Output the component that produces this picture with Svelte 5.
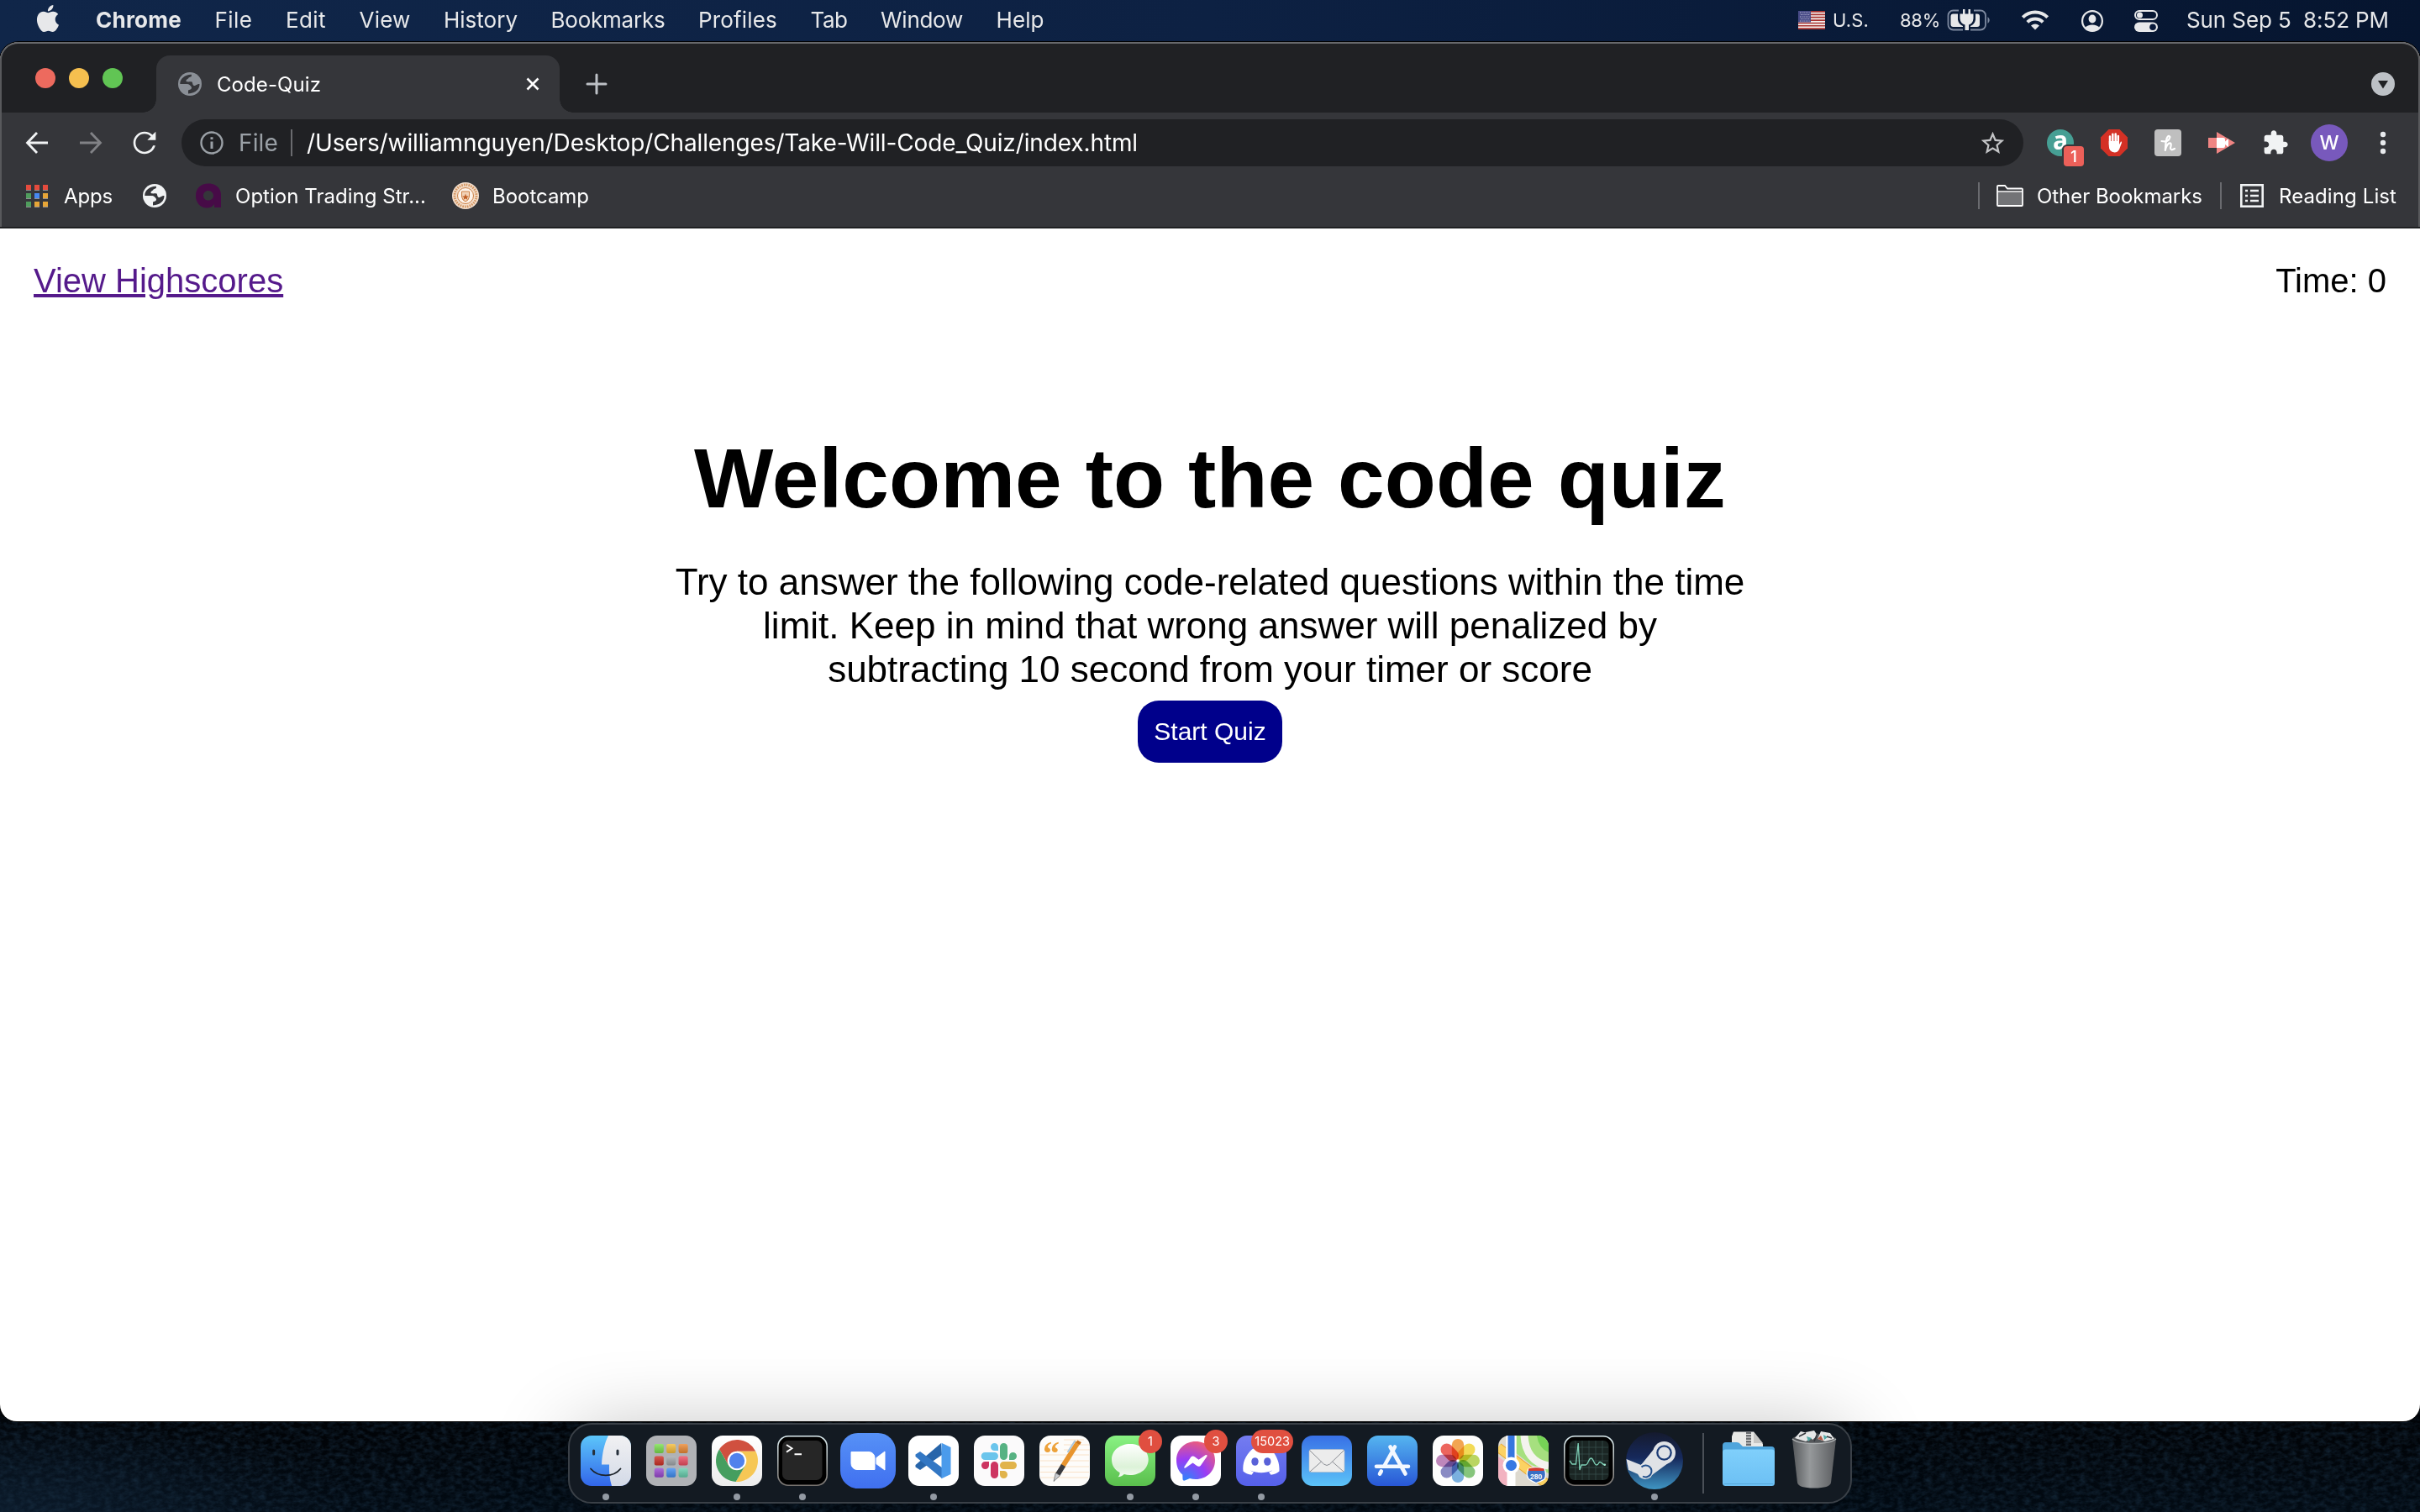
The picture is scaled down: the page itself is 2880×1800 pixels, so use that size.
<script>
  // Adjusts letter-spacing so a label occupies its designed width.
  function fit(node, width) {
    const natural = node.getBoundingClientRect().width;
    const gaps = node.textContent.length;
    node.style.letterSpacing = (width - natural) / gaps + 'px';
  }

  const menus = [
    ['File', 45], ['Edit', 48], ['View', 61], ['History', 88], ['Bookmarks', 136],
    ['Profiles', 94], ['Tab', 44], ['Window', 98], ['Help', 57]
  ];

  const dockApps = [
    { id: 'finder', running: true }, { id: 'launchpad' }, { id: 'chrome', running: true },
    { id: 'terminal', running: true }, { id: 'zoom' }, { id: 'vscode', running: true },
    { id: 'slack' }, { id: 'pages' }, { id: 'messages', running: true, badge: '1' },
    { id: 'messenger', running: true, badge: '3' }, { id: 'discord', running: true, badge: '15023' },
    { id: 'mail' }, { id: 'appstore' }, { id: 'photos' }, { id: 'maps' }, { id: 'activity' },
    { id: 'steam', running: true }
  ];

  const pads = [
    '#7be04f', '#f6bd3c', '#ec8a35', '#cf3127', '#a3a8ac', '#ee4f63', '#9a49d0', '#3f8df2', '#67cfae'
  ];
  const petals = ['#f39a3a', '#f3d83f', '#b3d24c', '#76bf6b', '#6aa8dd', '#7a7bbd', '#b777b4', '#ec5148'];
</script>

{#snippet globe(cls)}
  <svg class={cls} viewBox="0 0 28 28">
    <circle cx="14" cy="14" r="14" fill="currentColor" />
    <path class="sea" d="M2.3 14C2 8 8 2.6 16 2.8L15.8 5L12.5 6.5C12 8.5 9.5 8 9.5 10.5C10 12 14 11 16.5 11.5C17.5 13 17 15.5 19 16C21.5 16 22 14 25.5 14C25.5 20 21 25 12 25.5V21.5C13.5 20.5 16 21 16 18C14 14.5 12.5 14 9 14Z" />
  </svg>
{/snippet}

{#snippet art(id)}
  {#if id === 'finder'}
    <rect width="60" height="60" rx="13" fill="url(#g-finder)" />
    <path d="M33 0C28 10 25.5 22 25 34.5H34C33.6 44 34.6 52 37 60H47A13 13 0 0 0 60 47V13A13 13 0 0 0 47 0Z" fill="url(#g-face)" />
    <path d="M15.6 18v4M44 18v4" stroke="#26303c" stroke-width="3" stroke-linecap="round" />
    <path d="M12 39.5C21 50 39 50 47.5 39.5" fill="none" stroke="#1d2329" stroke-width="1.8" stroke-linecap="round" />
  {:else if id === 'launchpad'}
    <rect width="60" height="60" rx="13" fill="#b0b2b6" />
    {#each pads as color, i}
      <rect x={9.8 + (i % 3) * 14.4} y={10 + Math.floor(i / 3) * 14.4} width="11" height="11" rx="2.2" fill={color} />
      <rect x={9.8 + (i % 3) * 14.4} y={10 + Math.floor(i / 3) * 14.4} width="11" height="11" rx="2.2" fill="url(#g-pad)" />
    {/each}
  {:else if id === 'chrome'}
    <rect width="60" height="60" rx="13" fill="url(#g-white)" />
    <path d="M9.06 16.35A25 25 0 0 1 52.3 18.7H30L30 30L20.2 35.65Z" fill="#d0503f" />
    <path d="M52.3 18.7A25 25 0 0 1 28.65 54.96L39.8 35.65L30 30V18.7Z" fill="#f6c755" />
    <path d="M28.65 54.96A25 25 0 0 1 9.06 16.35L20.2 35.65L30 30L39.8 35.65Z" fill="#459e5f" />
    <circle cx="30" cy="30" r="11.3" fill="#fff" />
    <circle cx="30" cy="30" r="9.2" fill="#5182ec" />
  {:else if id === 'terminal'}
    <rect width="60" height="60" rx="13" fill="url(#g-metal)" />
    <rect x="1.6" y="1.6" width="56.8" height="56.8" rx="11.5" fill="#000" />
    <rect x="6" y="6" width="47.5" height="47" rx="7" fill="#262626" />
    <path d="M11 11l6.5 4.3l-6.5 4.3M20.5 22.3h8.5" fill="none" stroke="#fff" stroke-width="1.9" />
  {:else if id === 'zoom'}
    <rect x="-3" y="-3" width="66" height="66" rx="21" fill="url(#g-zoom)" />
    <path d="M10 19.5h21a7 7 0 0 1 7 7v14h-21a7 7 0 0 1-7-7ZM40 26.5L50 19V41L40 33.8Z" fill="#fff" stroke="#fff" stroke-linejoin="round" />
  {:else if id === 'vscode'}
    <rect width="60" height="60" rx="13" fill="#fff" />
    <path d="M39 9L40 23L14 41L8.5 37.5V35Z" fill="#2765aa" />
    <path d="M14 19L40 38V51L8.5 25V22.5Z" fill="#3277c4" />
    <path d="M39.5 8.8L50.5 14V46L39.5 51.2Z" fill="#4b9beb" />
  {:else if id === 'slack'}
    <rect width="60" height="60" rx="13" fill="#fbfafb" />
    <path d="M24.5 9a4.5 4.5 0 0 1 4.5 4.5V18h-4.5a4.5 4.5 0 0 1 0-9M13.2 20h11.3a4.5 4.5 0 0 1 0 9H13.2a4.5 4.5 0 0 1 0-9" fill="#6bc5ec" />
    <path d="M35.5 9a4.5 4.5 0 0 1 4.5 4.5v11a4.5 4.5 0 0 1-9 0v-11A4.5 4.5 0 0 1 35.5 9M42 29v-4.5a4.5 4.5 0 1 1 4.5 4.5Z" fill="#57b283" />
    <path d="M18 31v4.5A4.5 4.5 0 1 1 13.5 31ZM24.5 31a4.5 4.5 0 0 1 4.5 4.5v11a4.5 4.5 0 0 1-9 0v-11a4.5 4.5 0 0 1 4.5-4.5" fill="#cd3460" />
    <path d="M35.5 31h11a4.5 4.5 0 0 1 0 9h-11a4.5 4.5 0 0 1 0-9M31 42h4.5a4.5 4.5 0 1 1-4.5 4.5Z" fill="#e1b34b" />
  {:else if id === 'pages'}
    <rect width="60" height="60" rx="13" fill="#fdfcfa" />
    <path d="M29 5h24M29 11h30M29 17h31M1 23h58M1 30h58M1 37h58M1 43.5h58M2 50h56" stroke="#f9e2c8" stroke-width="1.2" />
    <text x="4" y="35" class="quote">“</text>
    <path d="M46 8L28 36" stroke="#e8952f" stroke-width="6" />
    <path d="M44.5 7L49 9.5" stroke="#c9741d" stroke-width="3.5" />
    <path d="M42.5 6L33.5 20" stroke="#a9c7de" stroke-width="1.8" />
    <path d="M28.5 35.5L22 46" stroke="#3a3b3f" stroke-width="6" />
    <path d="M19.3 44.5L24.5 47.7L17 54.5Z" fill="#c9ccd0" stroke="#4a4a4a" stroke-width=".6" />
  {:else if id === 'messages'}
    <rect width="60" height="60" rx="13" fill="url(#g-msg)" />
    <path d="M30 10C42.5 10 51.7 18 51.7 28.5S42.5 47 30 47C27.5 47 25 46.6 22.8 46C21 48 18.5 49 15.5 49.3C17.2 47.7 17.8 46 17.5 44C11.5 41 8 35.5 8 28.5C8 18 17.5 10 30 10Z" fill="url(#g-bubble)" />
  {:else if id === 'messenger'}
    <rect width="60" height="60" rx="13" fill="#fff" />
    <path d="M30 7C43 7 53 16.5 53 29.5S43 52 30 52C27.5 52 25.2 51.7 23 51L17 53.5C15.6 54 14.5 53.2 14.5 51.8L14.3 46.5C9.5 42.5 7 36.5 7 29.5C7 16.5 17 7 30 7Z" fill="url(#g-fb)" />
    <path d="M16.5 37L24 26C25.2 24.3 27.2 24 28.8 25.2L33.5 28.7L41.5 23.2C43 22.3 44.3 23.4 43.3 24.9L36.2 35.3C35 37 33 37.3 31.4 36.1L26.5 32.6L18.2 38.3C16.8 39.2 15.6 38.3 16.5 37Z" fill="#fff" />
  {:else if id === 'discord'}
    <rect width="60" height="60" rx="13" fill="url(#g-discord)" />
    <path d="M19.5 16C22 15 24.5 15 26 15L27 17H33L34 15C37 15 40 15.5 42 16.5C49 25 52 33 51.5 42.5C48.5 45 45 46.3 41.5 46.8L39 43.5C41 42.8 42.5 42 43 41.5C34.5 45 25.5 45 17 41.5C18 42.3 19.2 43 21 43.5L18.5 46.8C15 46.3 11.5 45 8.5 42.5C7.5 33 10.5 24 19.5 16Z" fill="#fff" />
    <ellipse cx="22.5" cy="31" rx="4.2" ry="4.8" fill="#5961d8" />
    <ellipse cx="37.3" cy="31" rx="4.2" ry="4.8" fill="#5961d8" />
  {:else if id === 'mail'}
    <rect width="60" height="60" rx="13" fill="url(#g-mail)" />
    <rect x="9" y="16.5" width="42" height="27" rx="2.5" fill="#ececec" stroke="#b9bcc2" stroke-width=".6" />
    <path d="M9.5 17.5L26.5 34Q30 37 33.5 34L50.5 17.5M10 43L23.5 31M50 43L36.5 31" fill="none" stroke="#8b8e94" />
  {:else if id === 'appstore'}
    <rect width="60" height="60" rx="13" fill="url(#g-store)" />
    <path d="M33 13.5L20.5 36M27.5 13.5L45.5 45.5M11 36.8H49M16.8 42.5L15 45.7" stroke="#f3f8ff" stroke-width="4.6" stroke-linecap="round" />
  {:else if id === 'photos'}
    <rect width="60" height="60" rx="13" fill="#fdfdfd" />
    {#each petals as color, i}
      <rect class="petal" x="22.8" y="4" width="14.4" height="24.5" rx="7.2" fill={color} transform={`rotate(${i * 45} 30 30)`} />
    {/each}
  {:else if id === 'maps'}
    <g clip-path="url(#c-icon)">
      <rect width="60" height="60" fill="#ddd9cf" />
      <path d="M0 25L12 34V60H0Z" fill="#f2b3c1" />
      <path d="M20 0H60V45L38 34L20 20Z" fill="#a6e07f" />
      <path d="M46 0H60V20Q48 15 46 0Z" fill="#76d356" />
      <path d="M31 0C32 20 42 33 60 36" fill="none" stroke="#f4f3ee" stroke-width="9" />
      <path d="M0 14L58 58" stroke="#eaa933" stroke-width="11.5" />
      <path d="M0 14L58 58" stroke="#fbd263" stroke-width="9.5" />
      <path d="M15.5 36V60" stroke="#fff" stroke-width="10" />
      <path d="M15.5 0V34" stroke="#fff" stroke-width="12.5" />
      <path d="M15.5 0V34" stroke="#3676df" stroke-width="8" />
      <circle cx="15.5" cy="35.5" r="10" fill="#fff" /><circle cx="15.5" cy="35.5" r="6.5" fill="#3779e3" />
      <path d="M36 39.5Q45 36 55 39.5Q58 47 55 52Q50 55 45 56.5Q39 54 36 51.5Q32.5 46 36 39.5Z" fill="#3a6fc4" stroke="#fff" stroke-width="1.3" />
      <path d="M36 42V39.5Q45 37 54.5 39.5V42Z" fill="#d53a2f" />
      <text x="45.2" y="51.5" class="route">280</text>
    </g>
  {:else if id === 'activity'}
    <rect width="60" height="60" rx="13" fill="url(#g-metal)" />
    <rect x="1.6" y="1.6" width="56.8" height="56.8" rx="11.5" fill="#000" />
    <rect x="6.5" y="6" width="47" height="47" rx="6" fill="#1b2624" />
    <path d="M14 6v47M22 6v47M30 6v47M38 6v47M46 6v47M7 14h46M7 22h46M7 30h46M7 38h46M7 46h46" stroke="#3b5450" stroke-width=".7" />
    <path d="M7 30L10 34H14.5L17.2 9L19 41L21 35H26C29 35 29.5 27 32.5 27S36 35 39 35S41 31.5 43 31.5S45.5 34.5 49 35" fill="none" stroke="#7ed0b6" stroke-width="1.3" />
    <circle cx="48.8" cy="34.8" r="1.3" fill="#9fe7cf" />
  {:else if id === 'steam'}
    <circle cx="30" cy="30" r="34" fill="url(#g-steam)" />
    <g fill="#dfe2e6">
      <path d="M-3.5 28L20 37.5L15 48L-1 41Z" />
      <circle cx="41.5" cy="20.5" r="13.5" />
      <circle cx="19" cy="42.5" r="9.5" />
      <path d="M28.5 17L14 35L27 47L46 33Z" />
    </g>
    <circle cx="41.5" cy="20.5" r="9.3" fill="#1a3a75" /><circle cx="41.5" cy="20.5" r="7" fill="#dfe2e6" />
    <path d="M14.5 37.5A7 7 0 1 1 16 48.5" fill="none" stroke="#23518c" stroke-width="2" />
  {/if}
{/snippet}

<div class="desktop">
  <svg class="wallpaper" preserveAspectRatio="none">
    <defs>
      <filter id="grain" x="0" y="0" width="100%" height="100%" color-interpolation-filters="sRGB">
        <feTurbulence type="fractalNoise" baseFrequency=".12 .2" numOctaves="3" seed="4" />
        <feColorMatrix values="0 0 0 0 .1  0 0 0 0 .19  0 0 0 0 .27  1.1 0 0 0 -.38" />
      </filter>
      <linearGradient id="g-finder" x2="0" y2="1"><stop stop-color="#5cc6fa" /><stop offset="1" stop-color="#3266ea" /></linearGradient>
      <linearGradient id="g-face" x2="0" y2="1"><stop stop-color="#f1f1f3" /><stop offset="1" stop-color="#d3dae7" /></linearGradient>
      <linearGradient id="g-pad" x2="0" y2="1"><stop stop-color="#fff" stop-opacity=".2" /><stop offset="1" stop-opacity=".18" /></linearGradient>
      <linearGradient id="g-white" x2="0" y2="1"><stop stop-color="#fff" /><stop offset="1" stop-color="#ececec" /></linearGradient>
      <linearGradient id="g-metal" x2="0" y2="1"><stop stop-color="#dff0f4" /><stop offset="1" stop-color="#77726e" /></linearGradient>
      <linearGradient id="g-zoom" x2="0" y2="1"><stop stop-color="#5691f6" /><stop offset="1" stop-color="#4070f0" /></linearGradient>
      <linearGradient id="g-msg" x2="0" y2="1"><stop stop-color="#89f283" /><stop offset="1" stop-color="#5abf4d" /></linearGradient>
      <linearGradient id="g-bubble" x2="0" y2="1"><stop stop-color="#fff" /><stop offset=".7" stop-color="#dcf2d8" /><stop offset="1" stop-color="#f5fbf4" /></linearGradient>
      <radialGradient id="g-fb" cx=".25" cy="1" r="1.1"><stop stop-color="#2a86fb" /><stop offset=".5" stop-color="#9a3cf5" /><stop offset="1" stop-color="#f4606f" /></radialGradient>
      <linearGradient id="g-discord" x2="0" y2="1"><stop stop-color="#747cf0" /><stop offset="1" stop-color="#5560ea" /></linearGradient>
      <linearGradient id="g-mail" x2="0" y2="1"><stop stop-color="#3870e6" /><stop offset="1" stop-color="#5cc3f8" /></linearGradient>
      <linearGradient id="g-store" x2="0" y2="1"><stop stop-color="#55b5f0" /><stop offset="1" stop-color="#2857d6" /></linearGradient>
      <linearGradient id="g-steam" x2="0" y2="1"><stop stop-color="#151a2e" /><stop offset=".45" stop-color="#16295c" /><stop offset="1" stop-color="#3f95c3" /></linearGradient>
      <linearGradient id="g-folder" x2="0" y2="1"><stop stop-color="#7fcffb" /><stop offset="1" stop-color="#6cc0f4" /></linearGradient>
      <linearGradient id="g-trash"><stop stop-color="#55585b" /><stop offset=".4" stop-color="#96999b" /><stop offset="1" stop-color="#5a5c5f" /></linearGradient>
      <clipPath id="c-icon"><rect width="60" height="60" rx="13" /></clipPath>
    </defs>
    <rect width="100%" height="100%" filter="url(#grain)" />
  </svg>

  <header class="menubar">
    <svg class="apple" viewBox="0 0 24 24"><path fill="currentColor" d="M12.152 6.896c-.948 0-2.415-1.078-3.960-1.040-2.040.027-3.910 1.183-4.961 3.014-2.117 3.675-.546 9.103 1.519 12.090 1.013 1.454 2.208 3.090 3.792 3.039 1.520-.065 2.090-.987 3.935-.987 1.831 0 2.350.987 3.960.948 1.637-.026 2.676-1.480 3.676-2.948 1.156-1.688 1.636-3.325 1.662-3.415-.039-.013-3.182-1.221-3.220-4.857-.026-3.040 2.480-4.494 2.597-4.559-1.429-2.090-3.623-2.324-4.390-2.376-2-.156-3.675 1.090-4.610 1.090zM15.530 3.830c.843-1.012 1.400-2.427 1.245-3.830-1.207.052-2.662.805-3.532 1.818-.780.896-1.454 2.338-1.273 3.714 1.338.104 2.715-.688 3.559-1.701" /></svg>
    <nav class="menus">
      <span class="app-name" use:fit={102}>Chrome</span>
      {#each menus as [label, width]}
        <span use:fit={width}>{label}</span>
      {/each}
    </nav>
    <div class="status">
      <svg class="flag" viewBox="0 0 32 22">
        <rect width="32" height="22" fill="#a8322f" />
        <path d="M0 2.6h32M0 6h32M0 9.4h32M0 12.8h32M0 16.2h32M0 19.4h32" stroke="#f3f0ee" stroke-width="1.7" />
        <rect width="15" height="13.5" fill="#474a86" />
        <path d="M2 2h12M3 4.5h11M2 7h12M3 9.5h11M2 12h12" stroke="#c5c6dd" stroke-width="1" stroke-dasharray="1 1.3" />
      </svg>
      <span class="small us" use:fit={43}>U.S.</span>
      <span class="small" use:fit={48}>88%</span>
      <svg class="battery" viewBox="0 0 52 26">
        <path d="M14 1.5H7.5A6 6 0 0 0 1.5 7.5V18.5A6 6 0 0 0 7.5 24.500H19M32 1.5H40A6 6 0 0 1 46 7.5V18.5A6 6 0 0 1 40 24.5H28" fill="none" stroke="#7e8aa0" stroke-width="1.8" />
        <path d="M48.5 9Q53 13 48.5 17Z" fill="#7e8aa0" />
        <path d="M7.5 5.500H13V12.500Q14 18 19 20V21H7.500Q4.500 21 4.500 18V8.500Q4.500 5.500 7.500 5.500M34 5.500H36Q39 5.500 39 8.500V18Q39 21 36 21H28V20Q33 18 34 12.500Z" fill="currentColor" />
        <path d="M19 0h2.500v5.500h4V0H28v5.500h3.500V11Q31 17 26 18.500V25h-4.500V18.500Q16 17 15.500 11V5.500H19Z" fill="currentColor" />
      </svg>
      <svg class="wifi" viewBox="0 0 34 26" fill="none" stroke="currentColor" stroke-width="4">
        <path d="M2.3 9.7A20.8 20.8 0 0 1 31.7 9.7" /><path d="M7.8 15.3A13 13 0 0 1 26.2 15.3" />
        <path d="M17 24.5L12 19.5Q17 15.5 22 19.5Z" fill="currentColor" stroke="none" />
      </svg>
      <svg class="user" viewBox="0 0 26 26">
        <circle cx="13" cy="13" r="11.9" fill="none" stroke="currentColor" stroke-width="2.2" />
        <ellipse cx="13" cy="10.5" rx="4.4" ry="5" fill="currentColor" />
        <path d="M4.5 21Q7 17.5 13 17.5T21.5 21Q18 25 13 25T4.5 21Z" fill="currentColor" />
      </svg>
      <svg class="control" viewBox="0 0 28 26">
        <rect x="1" y="1" width="26" height="10" rx="5" fill="none" stroke="currentColor" stroke-width="2" />
        <circle cx="6.5" cy="6" r="3.5" fill="currentColor" />
        <rect y="14.5" width="28" height="11.5" rx="5.75" fill="currentColor" /><circle cx="22" cy="20.2" r="3.8" fill="#08193a" />
      </svg>
      <span class="clock" use:fit={241}>Sun Sep 5&nbsp; 8:52 PM</span>
    </div>
  </header>

  <main class="window">
    <div class="chrome">
      <div class="strip">
        <div class="lights"><i class="red"></i><i class="amber"></i><i class="green"></i></div>
        <div class="tab">
          {@render globe('tab-globe')}
          <span use:fit={124}>Code-Quiz</span>
          <svg class="close" viewBox="0 0 16 16"><path d="M1.5 1.5L14.5 14.5M14.5 1.5L1.5 14.5" stroke="#fff" stroke-width="2.6" /></svg>
        </div>
        <svg class="plus" viewBox="0 0 24 24"><path d="M12 1V23M1 12H23" stroke="#bdc1c6" stroke-width="3" stroke-linecap="round" /></svg>
        <svg class="chevron" viewBox="0 0 28 28"><circle cx="14" cy="14" r="14" fill="#bdc1c6" /><path d="M8 10H20L14 19.5Z" fill="#202124" /></svg>
      </div>

      <div class="toolbar">
        <svg class="back" viewBox="0 0 28 28"><path d="M14 2L2.5 14L14 26M3 14H27" /></svg>
        <svg class="forward" viewBox="0 0 28 28"><path d="M14 2L25.5 14L14 26M25 14H1" /></svg>
        <svg class="reload" viewBox="0 0 24 24"><path fill="currentColor" d="M17.650 6.350C16.200 4.900 14.210 4 12 4c-4.420 0-7.990 3.580-7.990 8s3.570 8 7.990 8c3.730 0 6.840-2.550 7.730-6h-1.700c-.9 2.500-3.200 4.400-6.030 4.400-3.530 0-6.400-2.870-6.400-6.400s2.870-6.400 6.400-6.400c1.770 0 3.350.74 4.500 1.900L14 10h6V4z" /></svg>
        <div class="omnibox">
          <svg class="info" viewBox="0 0 28 28"><circle cx="14" cy="14" r="12.5" fill="none" stroke="#9aa0a6" stroke-width="2.4" /><path d="M14 12.5V21M14 7.2V10" stroke="#9aa0a6" stroke-width="3" /></svg>
          <span class="scheme" use:fit={47}>File</span>
          <i class="rule"></i>
          <span use:fit={989}>/Users/williamnguyen/Desktop/Challenges/Take-Will-Code_Quiz/index.html</span>
          <svg class="star" viewBox="0 0 24 24"><path fill="#c3c4c6" d="M22 9.240l-7.190-.620L12 2 9.190 8.630 2 9.240l5.460 4.730L5.820 21 12 17.270 18.180 21l-1.630-7.030L22 9.240zM12 15.400l-3.760 2.270 1-4.280-3.320-2.880 4.380-.380L12 6.100l1.710 4.040 4.380.380-3.320 2.880 1 4.280L12 15.400z" /></svg>
        </div>
        <div class="extensions">
          <div class="amazon"><b>a</b><em>1</em></div>
          <svg class="ext" viewBox="0 0 32 32"><path d="M9.5 0H22.5L32 9.5V22.5L22.5 32H9.5L0 22.5V9.5Z" fill="#d43125" /><path d="M11 18V8.5M14.3 16V5.7M17.7 16V5.5M20.8 17V8" stroke="#fff" stroke-width="2.5" stroke-linecap="round" /><path d="M9.8 14H22V18L24 14.5Q25.5 14 25 16L22 24Q20 27.5 16.5 27.5Q9.8 27 9.8 20Z" fill="#fff" /></svg>
          <svg class="ext" viewBox="0 0 32 32"><rect width="32" height="32" rx="4" fill="#bfbfbf" /><path d="M8.5 14Q17 16 18.5 9Q16.5 6 14.5 11Q13 17 12.8 25Q15 16 19 16.5Q20.5 17.5 19 22Q19 26 24 23" fill="none" stroke="#fff" stroke-width="2.2" stroke-linecap="round" stroke-linejoin="round" /></svg>
          <svg class="ext" viewBox="0 0 32 32"><path d="M0 10H10V3L32 16L10 29V22H0Z" fill="#f08583" /><path d="M10 10H18Q20 10 20 12V14.5L24 11V21L20 18V20Q20 22 18 22H10Z" fill="#fff" /></svg>
          <svg class="ext" viewBox="0 0 24 24"><path fill="#f1f3f4" d="M20.500 11H19V7c0-1.100-.9-2-2-2h-4V3.500C13 2.120 11.880 1 10.500 1S8 2.120 8 3.500V5H4c-1.100 0-1.990.9-1.990 2v3.800H3.500c1.490 0 2.700 1.210 2.700 2.700s-1.210 2.700-2.700 2.700H2V20c0 1.100.9 2 2 2h3.800v-1.500c0-1.490 1.210-2.700 2.700-2.700 1.490 0 2.700 1.210 2.700 2.700V22H17c1.100 0 2-.9 2-2v-4h1.500c1.380 0 2.500-1.120 2.500-2.500S21.880 11 20.500 11z" /></svg>
        </div>
        <span class="avatar">W</span>
        <svg class="kebab" viewBox="0 0 8 28"><g fill="#e8eaed"><circle cx="4" cy="4" r="3.2" /><circle cx="4" cy="14" r="3.2" /><circle cx="4" cy="24" r="3.2" /></g></svg>
      </div>

      <div class="bookmarks">
        <svg class="apps" viewBox="0 0 26 27">
          <path d="M0 6.5h6M10 6.5h6M20 6.5h6M0 16.5h6M10 16.5h6M20 16.5h6M0 26.5h6M10 26.5h6M20 26.5h6" stroke="#8f8f93" stroke-width="1" />
          <path d="M0 3h6M10 3h6M20 3h6" stroke="#e54b3d" stroke-width="6" />
          <path d="M0 13h6M0 23h6" stroke="#4f9d5d" stroke-width="6" />
          <path d="M10 13h6" stroke="#4688f1" stroke-width="6" />
          <path d="M20 13h6M10 23h6M20 23h6" stroke="#e6a537" stroke-width="6" />
        </svg>
        <span class="apps-label" use:fit={58}>Apps</span>
        {@render globe('mark-globe')}
        <svg class="option" viewBox="0 0 32 30"><path d="M31 29H23V25Q20 29.5 14 29.5C6 29.5 1 23 1 15C1 6 7 .5 16 .5S31 6 31 14ZM16 9C12.5 9 10 11.5 10 15S12.5 20.5 16 20.5S22 18 22 15S19.5 9 16 9Z" fill="#470b47" fill-rule="evenodd" /></svg>
        <span use:fit={227}>Option Trading Str...</span>
        <svg class="seal" viewBox="0 0 32 32">
          <circle cx="16" cy="16" r="16" fill="#f3ddca" />
          <circle cx="16" cy="16" r="13" fill="none" stroke="#d39560" stroke-width="2.8" stroke-dasharray="1.6 1.2" />
          <circle cx="16" cy="16" r="9.5" fill="#fdf3ea" stroke="#cd8146" />
          <path d="M11.5 11H20.5V17Q20 21.5 16 23Q12 21.5 11.5 17Z" fill="#f2d3b8" stroke="#cd8146" />
          <path d="M16 13.5L17 16.5H20L17.7 18.2L18.5 21L16 19.3L13.5 21L14.3 18.2L12 16.5H15Z" fill="#bd5a20" />
        </svg>
        <span use:fit={115}>Bootcamp</span>
        <i class="rule first"></i>
        <svg class="folder" viewBox="0 0 32 26"><path d="M1 2Q1 1 2 1H10L13 4.5H30Q31 4.5 31 5.5V24Q31 25 30 25H2Q1 25 1 24Z" fill="#35363a" stroke="#fff" stroke-width="1.8" /><path d="M2 8.5H30V24H2Z" fill="#737477" /><path d="M1 8H31" stroke="#fff" stroke-width="1.6" /></svg>
        <span use:fit={197}>Other Bookmarks</span>
        <i class="rule second"></i>
        <svg class="list" viewBox="0 0 28 28"><rect x="1.3" y="1.3" width="25.4" height="25.4" fill="none" stroke="#f1f3f4" stroke-width="2.6" /><path d="M6 8h3M6 14h3M6 20h3M12 8h10M12 14h10M12 20h10" stroke="#f1f3f4" stroke-width="2.5" /></svg>
        <span use:fit={140}>Reading List</span>
      </div>
    </div>

    <div class="page">
      <div class="page-head"><a href="#scores">View Highscores</a><span>Time: 0</span></div>
      <section class="intro">
        <h1>Welcome to the code quiz</h1>
        <p>Try to answer the following code-related questions within the time limit. Keep in mind that wrong answer will penalized by subtracting 10 second from your timer or score</p>
        <button>Start Quiz</button>
      </section>
    </div>
  </main>

  <footer class="dock">
    {#each dockApps as app}
      <div class="slot">
        <div class="icon">
          <svg viewBox="0 0 60 60">{@render art(app.id)}</svg>
          {#if app.badge}<span class="badge">{app.badge}</span>{/if}
        </div>
        {#if app.running}<i class="dot"></i>{/if}
      </div>
    {/each}
    <i class="divider"></i>
    <div class="slot"><div class="icon">
      <svg viewBox="0 0 60 60">
        <path d="M10 24V1L12-4.5H36L47 10V24Z" fill="#e9e9e7" />
        <path d="M36-4.5V9H47Z" fill="#c6c6c4" />
        <path d="M30-4.5V14" stroke="#6b6d70" stroke-width="6" stroke-dasharray="2.5 1" />
        <path d="M-1 12Q-1 8 3 8H16Q19 8 21 11L23 13H57Q61 13 61 17V30H-1Z" fill="#4fa5dc" />
        <rect x="-1" y="16.5" width="62" height="43.5" rx="3.5" fill="url(#g-folder)" />
        <path d="M1 57.5H59" stroke="#58a9dc" />
      </svg>
    </div></div>
    <div class="slot"><div class="icon">
      <svg viewBox="0 0 60 60">
        <path d="M4 4Q30-4 56 4L50 56Q49 62.5 30 62.5Q11 62.5 10 56Z" fill="url(#g-trash)" />
        <path d="M4 4Q8-2 30-2T56 4Q50 9 30 9T4 4" fill="#54575a" />
        <path d="M7 3L14-5L22-3L27 3L20 7ZM34 4L38-5L49-3L54 4L43 7ZM20-4L30-6L34 0L28 5Z" fill="#e6e7e7" />
        <path d="M21 1L27 3L23 7ZM41-1L46 2L42 5Z" fill="#4fa7a4" /><path d="M34 4L38 0L41 6Z" fill="#b35843" /><path d="M30 7L34-3M12 1L20-3M45 1L51 3" stroke="#34373c" stroke-width="1.6" />
        <path d="M4 4Q10 9.5 30 9.5T56 4" fill="none" stroke="#adb0b2" stroke-width="1.3" />
      </svg>
    </div></div>
  </footer>
</div>

<style>
  :global(body) { background: #01060c; }
  .desktop {
    position: relative; width: 2880px; height: 1800px; overflow: hidden;
    display: flex; flex-direction: column; align-items: center;
    background:
      radial-gradient(ellipse 420px 120px at 0 1800px, #0b1a2a, #0b1a2a00),
      linear-gradient(#0000 1600px, #010306 1600px, #010408 1710px, #020b14 1800px),
      linear-gradient(90deg, #102649, #0d2143 50%, #06152f);
    font-family: Inter, "Noto Sans", sans-serif; color: #fff;
  }
  .wallpaper { position: absolute; left: 0; bottom: 0; width: 2880px; height: 130px; }
  svg { display: block; flex: none; overflow: visible; }
  i { flex: none; }
  span { white-space: nowrap; }

  .menubar { position: relative; width: 100%; height: 47px; display: flex; align-items: center; color: #e7e8ea; font-size: 26px; padding-bottom: 3px; }
  .apple { width: 32px; height: 32px; margin: -3px 0 0 41px; }
  .menus { display: flex; gap: 39.5px; margin-left: 41px; }
  .app-name { font-weight: 700; }
  .status { display: flex; align-items: center; margin-left: auto; padding-right: 37px; }
  .small { font-size: 22px; }
  .flag { width: 32px; height: 22px; margin-right: 9px; }
  .us { margin-right: 37px; }
  .battery { width: 52px; height: 26px; margin-left: 8px; }
  .wifi { width: 34px; height: 26px; margin-left: 36px; }
  .user { width: 26px; height: 26px; margin: 2px 0 0 38px; }
  .control { width: 28px; height: 26px; margin: 2px 34px 0 37px; }

  .window {
    position: relative; width: 2880px; height: 1642px; box-sizing: border-box; display: flex; flex-direction: column;
    background: #fff; border-radius: 22px 22px 20px 20px; overflow: hidden; box-shadow: 0 0 0 1px #000;
  }
  .chrome { box-shadow: inset 0 2px 0 #67686b, inset 2px 0 0 #58595c, inset -2px 0 0 #58595c; border-radius: 22px 22px 0 0; background: #35363a; height: 222px; flex: none; font-size: 24px; border-bottom: 2px solid #1f2022; box-sizing: border-box; }
  .strip { height: 82px; margin: 0 2px; position: relative; top: 2px; display: flex; background: #202124; border-radius: 20px 20px 0 0; }
  .lights { display: flex; gap: 16px; padding: 29px 40px 0 40px; }
  .lights i { width: 24px; height: 24px; border-radius: 50%; }
  .red { background: #ed6a5e; }
  .amber { background: #f5bf4f; }
  .green { background: #61c554; }
  .tab { position: relative; width: 480px; height: 68px; margin-top: 14px; box-sizing: border-box; padding: 0 24px 0 26px; display: flex; align-items: center; background: #35363a; border-radius: 16px 16px 0 0; }
  .tab::before, .tab::after { content: ''; position: absolute; bottom: 0; width: 16px; height: 16px; }
  .tab::before { left: -16px; background: radial-gradient(circle at 0 0, #0000 15.5px, #35363a 16px); }
  .tab::after { right: -16px; background: radial-gradient(circle at 100% 0, #0000 15.5px, #35363a 16px); }
  .tab-globe { width: 28px; height: 28px; color: #8a8f96; margin-right: 18px; }
  .sea { fill: #35363a; }
  .close { width: 16px; height: 16px; margin-left: auto; }
  .plus { width: 24px; height: 24px; margin: 36px 0 0 32px; }
  .chevron { width: 28px; height: 28px; margin: 34px 28px 0 auto; }

  .toolbar { height: 72px; margin-top: 2px; display: flex; align-items: center; }
  .back, .forward { width: 28px; height: 28px; fill: none; stroke: #f1f3f4; stroke-width: 2.8; margin-left: 30px; }
  .forward { stroke: #818286; margin-left: 36px; }
  .reload { width: 40px; height: 40px; color: #f1f3f4; margin-left: 30px; }
  .omnibox { width: 2192px; height: 56px; margin-left: 24px; box-sizing: border-box; padding: 0 20px 0 22px; border-radius: 28px; background: #202124; display: flex; align-items: center; font-size: 28px; }
  .info { width: 28px; height: 28px; margin-right: 18px; }
  .scheme { color: #9aa0a6; }
  .rule { width: 2px; height: 32px; background: #6a6b6f; }
  .omnibox .rule { margin: 0 17px 0 15px; }
  .star { width: 33px; height: 33px; margin-left: auto; }
  .extensions { display: flex; gap: 32px; margin-left: 28px; }
  .ext { width: 32px; height: 32px; }
  .amazon { position: relative; width: 32px; height: 32px; border-radius: 50%; background: #469f94; display: flex; justify-content: center; align-items: center; }
  .amazon b { font: 700 30px/30px "Open Sans", sans-serif; margin-top: -7px; }
  .amazon em { position: absolute; left: 20px; top: 20px; width: 24px; height: 24px; border-radius: 4px; background: #ec6059; box-shadow: 0 0 0 2px #35363a; font: 500 19px/26px Inter, sans-serif; text-align: center; }
  .avatar { width: 44px; height: 44px; margin-left: 26px; border-radius: 50%; background: #7859bc; font: 500 23px/44px Inter, sans-serif; text-align: center; }
  .kebab { width: 8px; height: 28px; margin-left: 38px; }

  .bookmarks { height: 54px; display: flex; align-items: center; padding: 0 28px 0 31px; }
  .apps { width: 26px; height: 27px; margin-right: 19px; }
  .apps-label { margin-right: 36px; }
  .mark-globe { width: 28px; height: 28px; color: #f1f3f4; margin-right: 34px; }
  .option { width: 32px; height: 30px; margin-right: 16px; }
  .seal { width: 32px; height: 32px; margin: 0 16px 0 31px; }
  .first { margin-left: auto; }
  .folder { width: 32px; height: 26px; margin: 0 16px 0 20px; }
  .second { margin: 0 22px 0 21px; }
  .list { width: 28px; height: 28px; margin-right: 18px; }

  .page { font-family: "Liberation Sans", Arial, sans-serif; color: #000; font-size: 40px; line-height: 46px; }
  .page-head { display: flex; justify-content: space-between; padding: 39px 40px 41px; }
  a { color: #551a8b; text-decoration: underline; }
  .intro { display: flex; flex-direction: column; align-items: center; padding-top: 114px; }
  h1 { margin: 0 0 40px; font-size: 100px; line-height: 115px; font-weight: 700; letter-spacing: .07px; }
  p { margin: 0 0 11px; width: 1284px; font-size: 44px; line-height: 52px; text-align: center; }
  button { width: 172px; height: 74px; padding: 0; border: 0; border-radius: 25px; background: #00008b; color: #fff; font: 30px "Liberation Sans", Arial, sans-serif; }

  .dock {
    position: relative; box-sizing: border-box; width: 1528px; height: 96px; margin-top: 2px; padding: 0 4px;
    display: flex; border: 2px solid #3a4047; border-radius: 28px; background: #131a22; box-shadow: 0 10px 100px -8px #00000055;
  }
  .slot { width: 78px; height: 92px; display: flex; flex-direction: column; align-items: center; padding-top: 13px; box-sizing: border-box; }
  .icon { position: relative; width: 60px; height: 60px; margin-bottom: 9px; }
  .icon svg { width: 60px; height: 60px; }
  .dot { width: 8px; height: 8px; border-radius: 50%; background: #939aa3; }
  .badge { position: absolute; top: -7px; right: -8px; min-width: 28px; height: 28px; box-sizing: border-box; padding: 0 4px; border-radius: 14px; background: #e04f40; color: #fff; font-size: 14.5px; line-height: 28px; text-align: center; }
  .divider { width: 2px; height: 72px; margin: 10px 14px 0 18px; background: #4a5057; }
  .petal { mix-blend-mode: multiply; opacity: .88; }
  .quote { font: 700 40px "Liberation Serif", serif; fill: #eda23b; }
  .route { font: 700 8.5px "Liberation Sans", sans-serif; fill: #fff; text-anchor: middle; }
</style>
